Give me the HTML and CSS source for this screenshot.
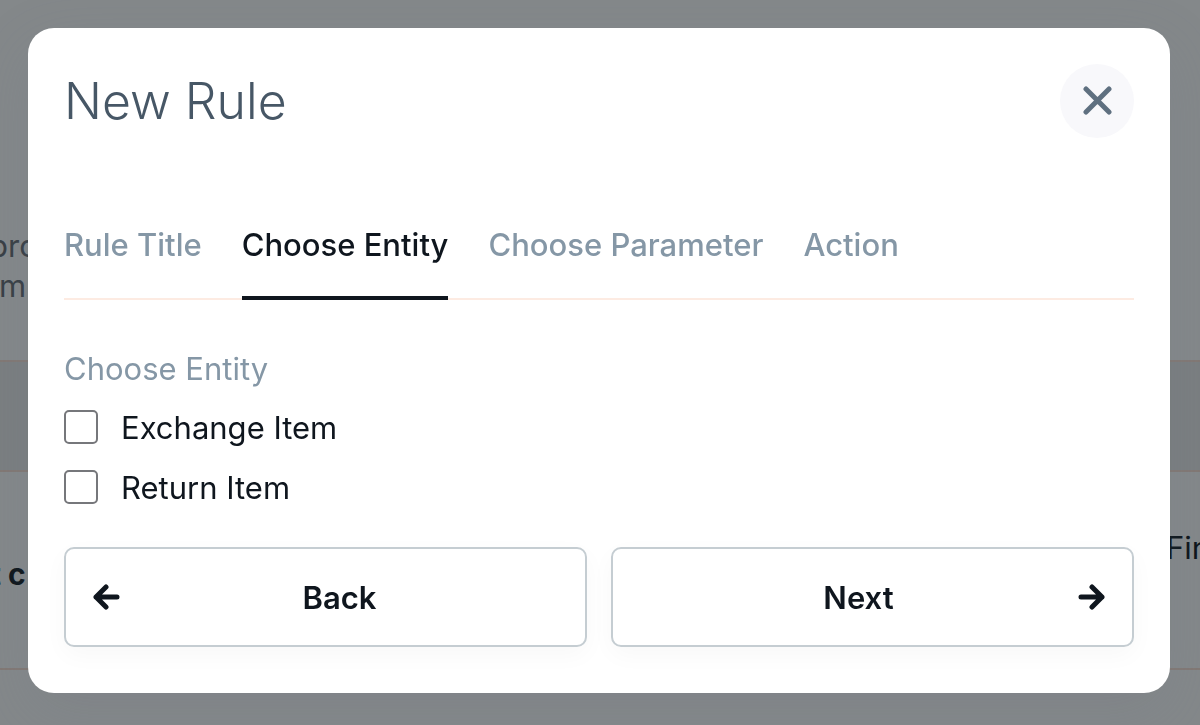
FILE: index.html
```html
<!DOCTYPE html>
<html lang="en">
  <head>
    <meta charset="UTF-8" />
    <meta name="viewport" content="width=device-width, initial-scale=1.0" />
    <title>New Rule</title>
    <link rel="stylesheet" href="styles.css" />
  </head>
  <body>
    <main class="page">
      <div class="page-intro">
        <p class="cut">pro</p>
        <p>m</p>
      </div>
      <div class="page-head"></div>
      <div class="page-row">
        <strong>t c</strong>
        <span class="page-cell">Fin</span>
      </div>
    </main>

    <div class="overlay">
      <div class="modal" role="dialog" aria-modal="true" aria-labelledby="modal-title">
        <header class="modal-header">
          <h1 id="modal-title">New Rule</h1>
          <button type="button" class="close-button" aria-label="Close">
            <svg width="30" height="30" viewBox="0 0 30 30">
              <path d="M4 3L27 26M27 3L4 26" />
            </svg>
          </button>
        </header>

        <nav class="tabs">
          <a href="#title">Rule Title</a>
          <a href="#entity" class="active" aria-current="step">Choose Entity</a>
          <a href="#parameter">Choose Parameter</a>
          <a href="#action">Action</a>
        </nav>

        <form>
          <fieldset class="options">
            <legend>Choose Entity</legend>
            <label for="exchange-item">
              <input type="checkbox" id="exchange-item" name="entity" value="exchange" />
              <span>Exchange Item</span>
            </label>
            <label for="return-item">
              <input type="checkbox" id="return-item" name="entity" value="return" />
              <span>Return Item</span>
            </label>
          </fieldset>

          <div class="actions">
            <button type="button" class="step-button">
              <svg width="28" height="28" viewBox="0 0 28 28">
                <path d="M24 14H3M13 4L3 14L13 24" />
              </svg>
              <span>Back</span>
            </button>
            <button type="button" class="step-button">
              <span>Next</span>
              <svg width="28" height="28" viewBox="0 0 28 28">
                <path d="M4 14H25M15 4L25 14L15 24" />
              </svg>
            </button>
          </div>
        </form>
      </div>
    </div>
  </body>
</html>
```

FILE: styles.css
```css
* {
  box-sizing: border-box;
}

body {
  margin: 0;
  overflow: hidden;
  font-family: Inter, "Liberation Sans", sans-serif;
  font-size: 31px;
  color: #0f161e;
}

/* page behind the dialog */
.page-intro {
  height: 360px;
  padding-top: 226px;
  color: #666c74;
}

.page-intro p {
  margin: 0 0 0 -1px;
  line-height: 40px;
}

.page-intro .cut {
  margin-left: -11px;
}

.page-head {
  height: 112px;
  background: #ececec;
  border-top: 2px solid #fbe0d4;
  border-bottom: 2px solid #fbe0d4;
}

.page-row {
  display: flex;
  justify-content: space-between;
  height: 198px;
  padding-top: 54px;
  border-bottom: 2px solid #fbe0d4;
  line-height: 44px;
  overflow: hidden;
}

.page-row strong {
  margin-left: -10px;
  padding-top: 26px;
  font-size: 30px;
}

.page-cell {
  margin-right: -10px;
}

/* dialog */
.overlay {
  position: fixed;
  inset: 0;
  padding: 28px 30px 28px 28px;
  background: rgba(10, 17, 22, 0.5);
}

.modal {
  padding: 36px 36px 46px;
  background: #fff;
  border-radius: 26px;
  box-shadow: 0 20px 60px rgba(112, 116, 130, 0.2);
}

.modal-header {
  display: flex;
  justify-content: space-between;
  align-items: center;
  margin-bottom: 85px;
}

.modal-header h1 {
  margin: 0;
  font-size: 50px;
  line-height: 64px;
  font-weight: 300;
  color: #475766;
}

.close-button {
  display: flex;
  align-items: center;
  justify-content: center;
  width: 74px;
  height: 74px;
  padding: 0;
  border: none;
  border-radius: 50%;
  background: #f8f8fb;
  cursor: pointer;
}

svg {
  fill: none;
  stroke: currentColor;
  stroke-width: 5;
  stroke-linecap: round;
  stroke-linejoin: round;
}

.close-button svg {
  color: #5f7080;
}

.tabs {
  display: flex;
  gap: 40px;
  border-bottom: 2px solid #fdebe2;
}

.tabs a {
  margin-bottom: -2px;
  padding-bottom: 29px;
  border-bottom: 4px solid transparent;
  color: #8597a6;
  font-weight: 500;
  line-height: 44px;
  text-decoration: none;
}

.tabs a.active {
  color: #0f161e;
  border-bottom-color: #0f161e;
}

.options {
  margin: 0 0 30px;
  padding: 47px 0 0;
  border: none;
}

.options legend {
  float: left;
  width: 100%;
  margin-bottom: 6px;
  padding: 0;
  color: #8597a6;
  line-height: 44px;
}

.options label {
  display: flex;
  clear: both;
  align-items: center;
  gap: 23px;
  height: 60px;
}

.options input {
  appearance: none;
  width: 34px;
  height: 34px;
  margin: 0;
  border: 2px solid #76777b;
  border-radius: 5px;
  background: #fff;
}

.options input:checked {
  background: #0f161e;
}

.actions {
  display: flex;
  gap: 24px;
}

.step-button {
  display: flex;
  flex: 1;
  align-items: center;
  height: 100px;
  padding: 0 27px;
  border: 2px solid #c5cdd2;
  border-radius: 10px;
  background: #fff;
  box-shadow: 0 8px 24px rgba(0, 0, 0, 0.03);
  color: #0f161e;
  font-family: inherit;
  font-size: 31px;
  font-weight: 600;
  cursor: pointer;
}

.step-button span {
  flex: 1;
}
```
